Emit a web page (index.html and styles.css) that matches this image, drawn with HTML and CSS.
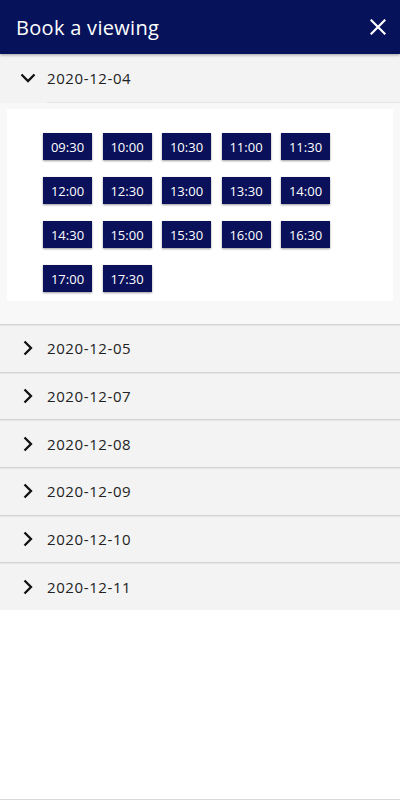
FILE: index.html
```html
<!DOCTYPE html>
<html lang="en">
<head>
<meta charset="utf-8">
<title>Book a viewing</title>
<link rel="stylesheet" href="styles.css">
</head>
<body>
<div class="page">
  <header class="topbar">
    <h1 class="title">Book a viewing</h1>
    <svg class="close" viewBox="0 0 16 16" width="16" height="16"><path d="M1.5 1.5L14.5 14.5M14.5 1.5L1.5 14.5" stroke="#fff" stroke-width="2.2" stroke-linecap="square" fill="none"/></svg>
  </header>

  <section class="item open">
    <div class="item-head">
      <svg class="chev" viewBox="0 0 16 16" width="16" height="16"><path d="M1.5 4.5L8 11L14.5 4.5" stroke="#111" stroke-width="2.3" fill="none"/></svg>
      <span class="date">2020-12-04</span>
    </div>
    <div class="item-body">
      <div class="card">
        <div class="slots">
          <button class="slot">09:30</button>
          <button class="slot">10:00</button>
          <button class="slot">10:30</button>
          <button class="slot">11:00</button>
          <button class="slot">11:30</button>
          <button class="slot">12:00</button>
          <button class="slot">12:30</button>
          <button class="slot">13:00</button>
          <button class="slot">13:30</button>
          <button class="slot">14:00</button>
          <button class="slot">14:30</button>
          <button class="slot">15:00</button>
          <button class="slot">15:30</button>
          <button class="slot">16:00</button>
          <button class="slot">16:30</button>
          <button class="slot">17:00</button>
          <button class="slot">17:30</button>
        </div>
      </div>
    </div>
  </section>

  <section class="item">
    <div class="item-head">
      <svg class="chev" viewBox="0 0 16 16" width="16" height="16"><path d="M4.5 1.5L11 8L4.5 14.5" stroke="#111" stroke-width="2.3" fill="none"/></svg>
      <span class="date">2020-12-05</span>
    </div>
  </section>
  <section class="item">
    <div class="item-head">
      <svg class="chev" viewBox="0 0 16 16" width="16" height="16"><path d="M4.5 1.5L11 8L4.5 14.5" stroke="#111" stroke-width="2.3" fill="none"/></svg>
      <span class="date">2020-12-07</span>
    </div>
  </section>
  <section class="item">
    <div class="item-head">
      <svg class="chev" viewBox="0 0 16 16" width="16" height="16"><path d="M4.5 1.5L11 8L4.5 14.5" stroke="#111" stroke-width="2.3" fill="none"/></svg>
      <span class="date">2020-12-08</span>
    </div>
  </section>
  <section class="item">
    <div class="item-head">
      <svg class="chev" viewBox="0 0 16 16" width="16" height="16"><path d="M4.5 1.5L11 8L4.5 14.5" stroke="#111" stroke-width="2.3" fill="none"/></svg>
      <span class="date">2020-12-09</span>
    </div>
  </section>
  <section class="item">
    <div class="item-head">
      <svg class="chev" viewBox="0 0 16 16" width="16" height="16"><path d="M4.5 1.5L11 8L4.5 14.5" stroke="#111" stroke-width="2.3" fill="none"/></svg>
      <span class="date">2020-12-10</span>
    </div>
  </section>
  <section class="item">
    <div class="item-head">
      <svg class="chev" viewBox="0 0 16 16" width="16" height="16"><path d="M4.5 1.5L11 8L4.5 14.5" stroke="#111" stroke-width="2.3" fill="none"/></svg>
      <span class="date">2020-12-11</span>
    </div>
  </section>

  <div class="filler"></div>
</div>
</body>
</html>
```

FILE: styles.css
```css
* { box-sizing: border-box; }
html, body { margin: 0; padding: 0; }
body {
  font-family: "Open Sans", "Noto Sans", sans-serif;
  background: #fff;
  color: #222;
}
.page {
  width: 400px;
  height: 800px;
  display: flex;
  flex-direction: column;
  border-bottom: 1px solid #d9d9d9;
  overflow: hidden;
}
.topbar {
  height: 54px;
  flex: none;
  background: #06135a;
  display: flex;
  align-items: center;
  justify-content: space-between;
  padding: 0 14px 0 16px;
  box-shadow: 0 1px 3px rgba(0,0,0,0.35);
  position: relative;
  z-index: 2;
}
.title {
  margin: 0;
  font-size: 20px;
  font-weight: 400;
  color: #fff;
  letter-spacing: 0.3px;
}
.close { display: block; }

.item {
  flex: none;
  background: #f3f3f3;
  border-top: 1px solid #d4d4d4;
  box-shadow: inset 0 1px 1px rgba(0,0,0,0.06);
}
.item.open { border-top: none; box-shadow: none; }
.item-head {
  height: 46.7px;
  display: flex;
  align-items: center;
  padding-left: 20px;
}
.item.open .item-head { height: 48px; }
.chev { flex: none; margin-right: 11px; }
.date {
  font-size: 15px;
  color: #222;
  letter-spacing: 0.6px;
}
.item-body {
  background: #f8f8f8;
  border-top: 1px solid transparent;
  background-clip: padding-box;
  position: relative;
  padding: 6px 7px 23px;
}
.item-body::before {
  content: "";
  position: absolute;
  top: -1px;
  left: 47px;
  right: 0;
  height: 1px;
  background: #e6e6e6;
}
.card {
  background: #fff;
  padding: 24px 36px 8px;
  min-height: 192px;
}
.slots {
  display: grid;
  grid-template-columns: repeat(5, 49px);
  column-gap: 10.5px;
  row-gap: 17px;
}
.slot {
  height: 27px;
  border: none;
  margin: 0;
  padding: 0;
  background: #0a115a;
  color: #fff;
  font-family: "Open Sans", "Noto Sans", sans-serif;
  font-size: 13px;
  letter-spacing: 0;
  box-shadow: 0 1px 2px rgba(0,0,0,0.4);
}
.filler { flex: 1; background: #fff; }
```
